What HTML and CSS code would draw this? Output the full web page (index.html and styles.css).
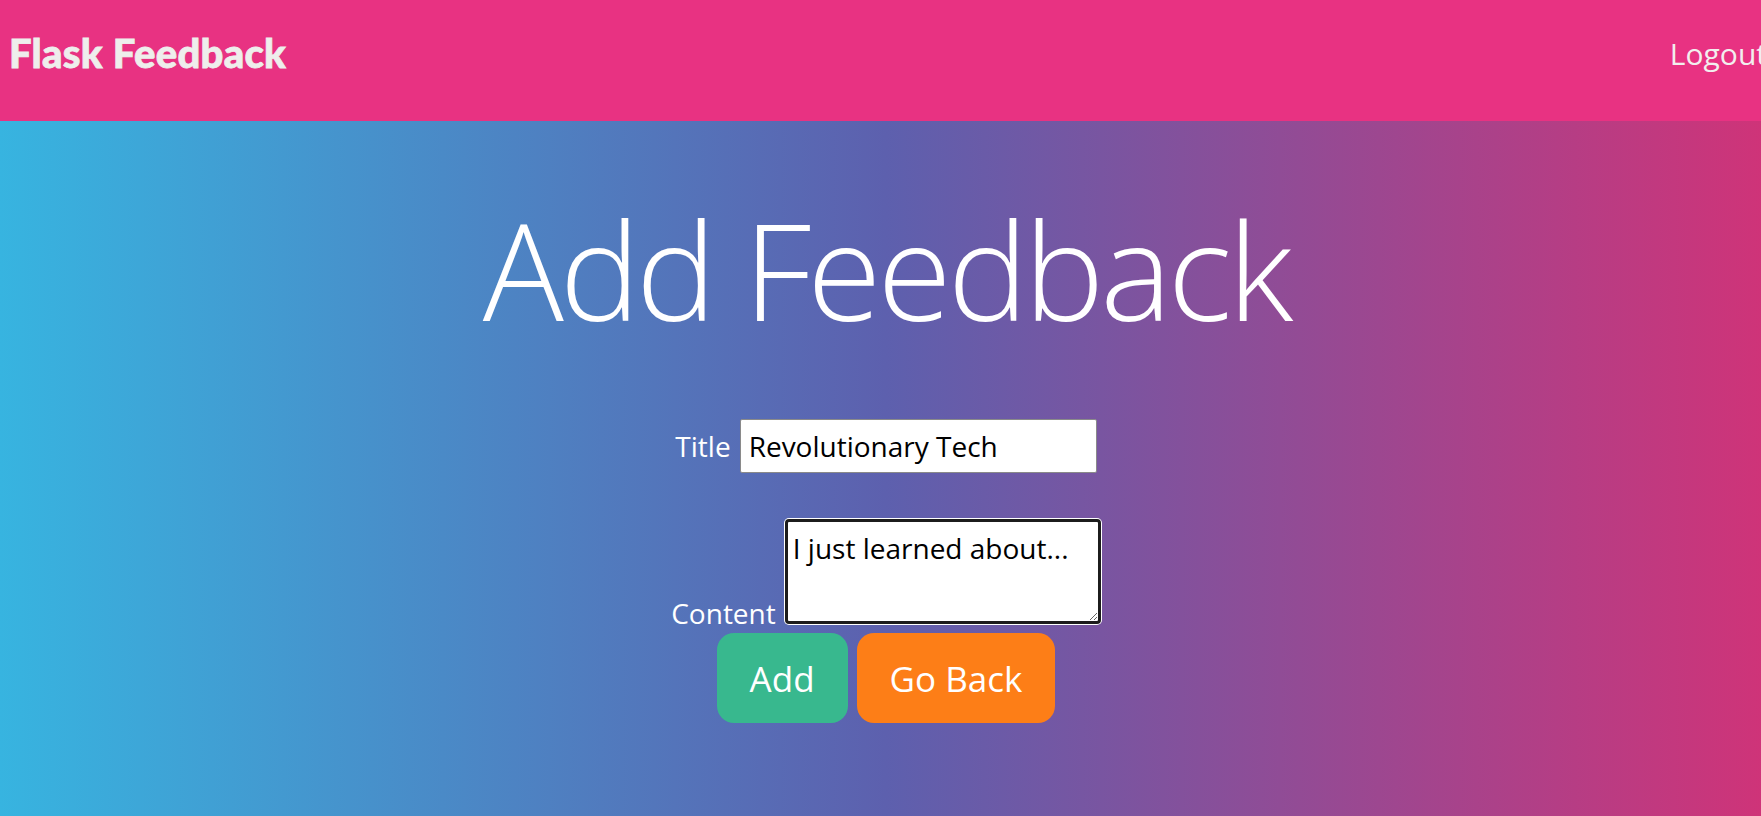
FILE: index.html
```html
<!DOCTYPE html>
<html lang="en">
<head>
<meta charset="utf-8">
<title>Add Feedback</title>
<link rel="stylesheet" href="styles.css">
</head>
<body>
<div class="page">
  <header class="navbar">
    <a class="brand" href="#">Flask Feedback</a>
    <a class="nav-link" href="#">Logout</a>
  </header>
  <main class="content">
    <h1 class="title">Add Feedback</h1>
    <form class="feedback-form">
      <div class="form-row form-row-title">
        <label class="form-label" for="title">Title</label><input class="form-input" id="title" type="text" value="Revolutionary Tech">
      </div>
      <div class="form-row form-row-content">
        <label class="form-label" for="content">Content</label><textarea class="form-textarea is-focused" id="content">I just learned about...</textarea>
      </div>
      <div class="form-actions">
        <button class="btn btn-add" type="button">Add</button>
        <a class="btn btn-back" href="#">Go Back</a>
      </div>
    </form>
  </main>
</div>
</body>
</html>
```

FILE: styles.css
```css
html, body {
  margin: 0;
  padding: 0;
  overflow: hidden;
}

body {
  font-family: "Open Sans", "Noto Sans", sans-serif;
  color: #fff;
  height: 816px;
}

.page {
  width: 1772px;
  height: 816px;
  display: flex;
  flex-direction: column;
  background: linear-gradient(to right, #37b4e0 0%, #5d60ae 50%, #d03378 100%);
}

.navbar {
  flex: 0 0 121px;
  display: flex;
  align-items: center;
  justify-content: space-between;
  padding: 0 5px 15px 9px;
  box-sizing: border-box;
  background: #e83282;
}

.brand {
  font-family: "Lato", sans-serif;
  font-weight: 900;
  font-size: 40px;
  color: #eeeeec;
  text-decoration: none;
  letter-spacing: 0.3px;
  -webkit-text-stroke: 0.8px #eeeeec;
}

.nav-link {
  font-size: 30px;
  color: #f2eeee;
  text-decoration: none;
}

.content {
  flex: 1;
  text-align: center;
}

.title {
  margin: 81px 0 0;
  font-size: 135px;
  font-weight: 300;
  letter-spacing: -4px;
  line-height: 1;
}

.feedback-form {
  margin-top: 82px;
}

.form-row {
  font-size: 28px;
}

.form-row-title {
  margin-bottom: 46px;
}

.form-row-content {
  margin-bottom: 1px;
}

.form-label {
  margin-right: 9px;
}

.form-input {
  font-family: inherit;
  font-size: 28px;
  line-height: 38px;
  width: 357px;
  height: 54px;
  box-sizing: border-box;
  padding: 7px 8px;
  border: 1px solid #8a8a8a;
  border-radius: 2px;
  background: #fff;
  color: #000;
  vertical-align: baseline;
}

.form-textarea {
  font-family: inherit;
  font-size: 28px;
  line-height: 38px;
  width: 316px;
  height: 105px;
  box-sizing: border-box;
  padding: 7px 5px;
  border: 3px solid #1c1c1c;
  border-radius: 4px;
  background: #fff;
  color: #000;
  margin: 0;
}

.form-textarea.is-focused {
  box-shadow: 0 0 0 1px #fff;
}

.form-actions {
  display: flex;
  justify-content: center;
  gap: 9px;
}

.btn {
  display: inline-flex;
  align-items: center;
  justify-content: center;
  height: 90px;
  padding: 0 33px;
  box-sizing: border-box;
  border: none;
  border-radius: 17px;
  font-family: inherit;
  font-size: 35px;
  color: #fff;
  text-decoration: none;
}

.btn-add {
  background: #38b88e;
}

.btn-back {
  background: #fd7e17;
}
```
